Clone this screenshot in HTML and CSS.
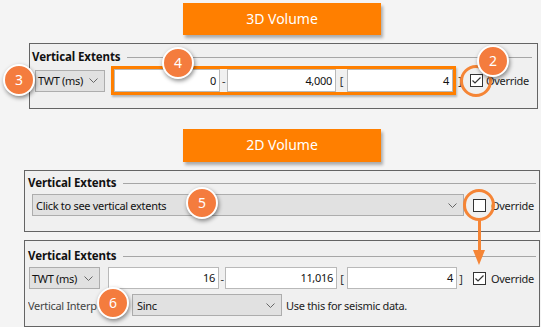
FILE: index.html
```html
<!DOCTYPE html>
<html lang="en">
<head>
    <meta charset="UTF-8">
    <title>Vertical Extents</title>
    <link rel="stylesheet" href="styles.css">
</head>
<body>
    <div class="page">
        <div class="tag tag-3d">3D Volume</div>

        <div class="panel panel-one">
            <div class="legend"><span>Vertical Extents</span><i></i></div>
            <div class="row">
                <div class="combo combo-unit">TWT (ms)
                    <svg class="chev" width="9" height="5" viewBox="0 0 9 5"><polyline points="0.5,0.5 4.5,4.5 8.5,0.5"/></svg>
                </div>
                <div class="hl">
                    <div class="field f1">0</div>
                    <span class="sep s-dash">-</span>
                    <div class="field f2">4,000</div>
                    <span class="sep s-open">[</span>
                    <div class="field f3">4</div>
                </div>
                <span class="sep s-close">]</span>
                <div class="check on"><svg width="11" height="11" viewBox="0 0 11 11"><polyline points="1.5,5.5 4,8 9.5,2.5"/></svg></div>
                <span class="check-label">Override</span>
            </div>
        </div>

        <div class="tag tag-2d">2D Volume</div>

        <div class="panel panel-two">
            <div class="legend"><span>Vertical Extents</span><i></i></div>
            <div class="row">
                <div class="combo combo-wide">Click to see vertical extents
                    <svg class="chev" width="9" height="5" viewBox="0 0 9 5"><polyline points="0.5,0.5 4.5,4.5 8.5,0.5"/></svg>
                </div>
                <div class="check"></div>
                <span class="check-label">Override</span>
            </div>
        </div>

        <div class="panel panel-three">
            <div class="legend"><span>Vertical Extents</span><i></i></div>
            <div class="row">
                <div class="combo combo-unit">TWT (ms)
                    <svg class="chev" width="9" height="5" viewBox="0 0 9 5"><polyline points="0.5,0.5 4.5,4.5 8.5,0.5"/></svg>
                </div>
                <div class="field g1">16</div>
                <span class="sep t-dash">-</span>
                <div class="field g2">11,016</div>
                <span class="sep t-open">[</span>
                <div class="field g3">4</div>
                <span class="sep t-close">]</span>
                <div class="check on"><svg width="11" height="11" viewBox="0 0 11 11"><polyline points="1.5,5.5 4,8 9.5,2.5"/></svg></div>
                <span class="check-label">Override</span>
            </div>
            <div class="row row-interp">
                <span class="interp-label">Vertical Interp</span>
                <div class="combo combo-sinc">Sinc
                    <svg class="chev" width="9" height="5" viewBox="0 0 9 5"><polyline points="0.5,0.5 4.5,4.5 8.5,0.5"/></svg>
                </div>
                <span class="hint">Use this for seismic data.</span>
            </div>
        </div>

        <!-- callouts -->
        <div class="ring ring-a"></div>
        <div class="ring ring-b"></div>
        <div class="arrow-line"></div>
        <div class="arrow-head"></div>
        <div class="badge b2">2</div>
        <div class="badge b3">3</div>
        <div class="badge b4">4</div>
        <div class="badge b5">5</div>
        <div class="badge b6">6</div>
    </div>
</body>
</html>
```

FILE: styles.css
```css
body {
    margin: 0;
    padding: 0;
    background-color: #f4f4f4;
    font-family: "Noto Sans", sans-serif;
    font-size: 11px;
    letter-spacing: -0.3px;
    color: #111;
    overflow: hidden;
}

.page {
    position: relative;
    width: 541px;
    height: 327px;
    overflow: hidden;
}

.tag {
    width: 198px;
    background-color: #ff7f00;
    color: #fff;
    font-size: 14px;
    letter-spacing: 0;
    text-align: center;
    margin-left: 183px;
    box-shadow: 2px 3px 3px rgba(0, 0, 0, 0.3);
}

.tag-3d {
    margin-top: 3px;
    height: 32px;
    line-height: 31px;
}

.tag-2d {
    margin-top: 20px;
    height: 33px;
    line-height: 32px;
}

.panel {
    box-sizing: border-box;
    background-color: #f0f0f0;
    border: 1px solid #646464;
}

.panel-one {
    margin-top: 8px;
    margin-left: 29px;
    width: 509px;
    height: 66px;
    padding: 5px 5px 0 2px;
}

.panel-two {
    margin-top: 8px;
    margin-left: 24px;
    width: 516px;
    height: 62px;
    padding: 4px 3px 0 3px;
}

.panel-three {
    margin-top: 8px;
    margin-left: 24px;
    width: 516px;
    height: 87px;
    padding: 7px 3px 0 3px;
}

.legend {
    display: flex;
    align-items: center;
    height: 15px;
}

.legend span {
    font-weight: bold;
    font-size: 11.5px;
    letter-spacing: -0.1px;
    color: #111;
}

.legend i {
    flex: 1;
    height: 0;
    border-top: 1px solid #a6a6a6;
    margin-left: 6px;
    margin-top: 1px;
}

.row {
    display: flex;
    align-items: center;
}

.combo {
    box-sizing: border-box;
    height: 22px;
    background-color: #e1e1e1;
    border: 1px solid #adadad;
    display: flex;
    align-items: center;
    padding-left: 2px;
    color: #111;
}

.chev {
    margin-left: auto;
    margin-right: 6px;
}

.chev polyline {
    fill: none;
    stroke: #666;
    stroke-width: 1;
}

.field {
    box-sizing: border-box;
    height: 22px;
    background-color: #fff;
    border: 1px solid #b9b9b9;
    text-align: right;
    line-height: 20px;
    padding-right: 3px;
    color: #111;
}

.sep {
    text-align: center;
    color: #333;
}

.check {
    box-sizing: border-box;
    width: 13px;
    height: 13px;
    background-color: #fff;
    border: 1px solid #333;
    display: flex;
    align-items: center;
    justify-content: center;
}

.check polyline {
    fill: none;
    stroke: #333;
    stroke-width: 1.2;
}

.check-label {
    color: #222;
}

/* panel one */
.panel-one .row {
    margin-top: 2px;
}

.panel-one .combo-unit {
    margin-left: 3px;
    width: 70px;
}

.hl {
    display: flex;
    align-items: center;
    border: 3px solid #ff7f00;
    margin-left: 6px;
    box-shadow: 1px 2px 2px rgba(0, 0, 0, 0.25);
}

.hl .field {
    height: 23px;
    line-height: 21px;
}

.f1 { width: 106px; }
.f2 { width: 109px; }
.f3 { width: 106px; }
.s-dash { width: 7px; }
.s-open { width: 11px; }
.s-close { width: 8px; }

.panel-one .check {
    margin-left: 6px;
}

.panel-one .check-label {
    margin-left: 3px;
}

/* panel two */
.panel-two .row {
    margin-top: 4px;
}

.combo-wide {
    margin-left: 4px;
    width: 432px;
    padding-left: 3px;
}

.panel-two .check {
    margin-left: 9px;
}

.panel-two .check-label {
    margin-left: 5px;
}

/* panel three */
.panel-three .row {
    margin-top: 4px;
}

.panel-three .combo-unit {
    margin-left: 1px;
    width: 71px;
}

.g1 { width: 111px; margin-left: 8px; }
.g2 { width: 112px; }
.g3 { width: 110px; }
.t-dash { width: 6px; }
.t-open { width: 10px; }
.t-close { width: 8px; }

.panel-three .check {
    margin-left: 8px;
}

.panel-three .check-label {
    margin-left: 5px;
}

.row-interp {
    margin-top: 5px !important;
}

.interp-label {
    width: 104px;
    color: #444;
    white-space: nowrap;
    overflow: hidden;
}

.combo-sinc {
    width: 150px;
    padding-left: 4px;
}

.hint {
    margin-left: 4px;
    color: #222;
}

/* callouts */
.badge {
    position: absolute;
    box-sizing: border-box;
    width: 32px;
    height: 32px;
    border-radius: 50%;
    background-color: #f47c3e;
    border: 2px solid #fff;
    color: #fff;
    font-size: 14px;
    letter-spacing: 0;
    line-height: 28px;
    text-align: center;
    box-shadow: 1px 2px 4px rgba(0, 0, 0, 0.45);
}

.b2 { left: 477px; top: 45px; }
.b3 { left: 3px; top: 64px; }
.b4 { left: 162px; top: 47px; }
.b5 { left: 186px; top: 187px; }
.b6 { left: 97px; top: 287px; }

.ring {
    position: absolute;
    box-sizing: border-box;
    width: 32px;
    height: 32px;
    border-radius: 50%;
    border: 3px solid #f58536;
}

.ring-a { left: 460px; top: 65px; }
.ring-b { left: 463px; top: 189px; }

.arrow-line {
    position: absolute;
    left: 478px;
    top: 220px;
    width: 3px;
    height: 32px;
    background-color: #f58536;
}

.arrow-head {
    position: absolute;
    left: 473px;
    top: 250px;
    width: 0;
    height: 0;
    border-left: 6px solid transparent;
    border-right: 6px solid transparent;
    border-top: 15px solid #f58536;
}
```
